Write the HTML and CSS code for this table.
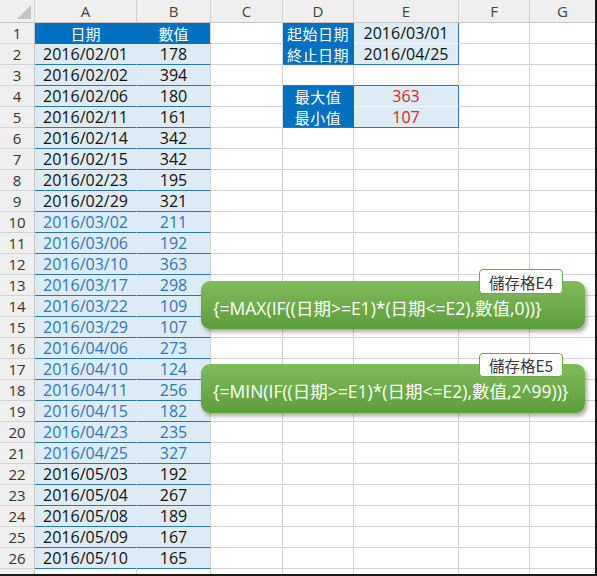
FILE: index.html
```html
<!DOCTYPE html>
<html>
<head>
<meta charset="utf-8">
<link rel="stylesheet" href="styles.css">
</head>
<body>
<div class="sheet">
  <div class="row hdr">
    <div class="c rh corner"><span class="tri"></span></div>
    <div class="c">A</div><div class="c">B</div><div class="c">C</div><div class="c">D</div><div class="c">E</div><div class="c">F</div><div class="c">G</div>
  </div>
  <div class="row">
    <div class="c rh">1</div>
    <div class="c th a">日期</div><div class="c th b">數值</div><div class="c"></div>
    <div class="c lab lab-top">起始日期</div><div class="c val val-top">2016/03/01</div><div class="c"></div><div class="c"></div>
  </div>
  <div class="row">
    <div class="c rh">2</div>
    <div class="c d a">2016/02/01</div><div class="c d b">178</div><div class="c"></div>
    <div class="c lab lab-bot">終止日期</div><div class="c val val-bot">2016/04/25</div><div class="c"></div><div class="c"></div>
  </div>
  <div class="row">
    <div class="c rh">3</div>
    <div class="c d a">2016/02/02</div><div class="c d b">394</div><div class="c"></div>
    <div class="c above"></div><div class="c above"></div><div class="c"></div><div class="c"></div>
  </div>
  <div class="row">
    <div class="c rh">4</div>
    <div class="c d a">2016/02/06</div><div class="c d b">180</div><div class="c"></div>
    <div class="c lab lab-top">最大值</div><div class="c val val-top red">363</div><div class="c"></div><div class="c"></div>
  </div>
  <div class="row">
    <div class="c rh">5</div>
    <div class="c d a">2016/02/11</div><div class="c d b">161</div><div class="c"></div>
    <div class="c lab lab-bot">最小值</div><div class="c val val-bot red">107</div><div class="c"></div><div class="c"></div>
  </div>
  <div class="row">
    <div class="c rh">6</div>
    <div class="c d a">2016/02/14</div><div class="c d b">342</div>
    <div class="c"></div><div class="c"></div><div class="c"></div><div class="c"></div><div class="c"></div>
  </div>
  <div class="row">
    <div class="c rh">7</div>
    <div class="c d a">2016/02/15</div><div class="c d b">342</div>
    <div class="c"></div><div class="c"></div><div class="c"></div><div class="c"></div><div class="c"></div>
  </div>
  <div class="row">
    <div class="c rh">8</div>
    <div class="c d a">2016/02/23</div><div class="c d b">195</div>
    <div class="c"></div><div class="c"></div><div class="c"></div><div class="c"></div><div class="c"></div>
  </div>
  <div class="row">
    <div class="c rh">9</div>
    <div class="c d a">2016/02/29</div><div class="c d b">321</div>
    <div class="c"></div><div class="c"></div><div class="c"></div><div class="c"></div><div class="c"></div>
  </div>
  <div class="row">
    <div class="c rh">10</div>
    <div class="c d a hl">2016/03/02</div><div class="c d b hl">211</div>
    <div class="c"></div><div class="c"></div><div class="c"></div><div class="c"></div><div class="c"></div>
  </div>
  <div class="row">
    <div class="c rh">11</div>
    <div class="c d a hl">2016/03/06</div><div class="c d b hl">192</div>
    <div class="c"></div><div class="c"></div><div class="c"></div><div class="c"></div><div class="c"></div>
  </div>
  <div class="row">
    <div class="c rh">12</div>
    <div class="c d a hl">2016/03/10</div><div class="c d b hl">363</div>
    <div class="c"></div><div class="c"></div><div class="c"></div><div class="c"></div><div class="c"></div>
  </div>
  <div class="row">
    <div class="c rh">13</div>
    <div class="c d a hl">2016/03/17</div><div class="c d b hl">298</div>
    <div class="c"></div><div class="c"></div><div class="c"></div><div class="c"></div><div class="c"></div>
  </div>
  <div class="row">
    <div class="c rh">14</div>
    <div class="c d a hl">2016/03/22</div><div class="c d b hl">109</div>
    <div class="c"></div><div class="c"></div><div class="c"></div><div class="c"></div><div class="c"></div>
  </div>
  <div class="row">
    <div class="c rh">15</div>
    <div class="c d a hl">2016/03/29</div><div class="c d b hl">107</div>
    <div class="c"></div><div class="c"></div><div class="c"></div><div class="c"></div><div class="c"></div>
  </div>
  <div class="row">
    <div class="c rh">16</div>
    <div class="c d a hl">2016/04/06</div><div class="c d b hl">273</div>
    <div class="c"></div><div class="c"></div><div class="c"></div><div class="c"></div><div class="c"></div>
  </div>
  <div class="row">
    <div class="c rh">17</div>
    <div class="c d a hl">2016/04/10</div><div class="c d b hl">124</div>
    <div class="c"></div><div class="c"></div><div class="c"></div><div class="c"></div><div class="c"></div>
  </div>
  <div class="row">
    <div class="c rh">18</div>
    <div class="c d a hl">2016/04/11</div><div class="c d b hl">256</div>
    <div class="c"></div><div class="c"></div><div class="c"></div><div class="c"></div><div class="c"></div>
  </div>
  <div class="row">
    <div class="c rh">19</div>
    <div class="c d a hl">2016/04/15</div><div class="c d b hl">182</div>
    <div class="c"></div><div class="c"></div><div class="c"></div><div class="c"></div><div class="c"></div>
  </div>
  <div class="row">
    <div class="c rh">20</div>
    <div class="c d a hl">2016/04/23</div><div class="c d b hl">235</div>
    <div class="c"></div><div class="c"></div><div class="c"></div><div class="c"></div><div class="c"></div>
  </div>
  <div class="row">
    <div class="c rh">21</div>
    <div class="c d a hl">2016/04/25</div><div class="c d b hl">327</div>
    <div class="c"></div><div class="c"></div><div class="c"></div><div class="c"></div><div class="c"></div>
  </div>
  <div class="row">
    <div class="c rh">22</div>
    <div class="c d a">2016/05/03</div><div class="c d b">192</div>
    <div class="c"></div><div class="c"></div><div class="c"></div><div class="c"></div><div class="c"></div>
  </div>
  <div class="row">
    <div class="c rh">23</div>
    <div class="c d a">2016/05/04</div><div class="c d b">267</div>
    <div class="c"></div><div class="c"></div><div class="c"></div><div class="c"></div><div class="c"></div>
  </div>
  <div class="row">
    <div class="c rh">24</div>
    <div class="c d a">2016/05/08</div><div class="c d b">189</div>
    <div class="c"></div><div class="c"></div><div class="c"></div><div class="c"></div><div class="c"></div>
  </div>
  <div class="row">
    <div class="c rh">25</div>
    <div class="c d a">2016/05/09</div><div class="c d b">167</div>
    <div class="c"></div><div class="c"></div><div class="c"></div><div class="c"></div><div class="c"></div>
  </div>
  <div class="row">
    <div class="c rh">26</div>
    <div class="c d a">2016/05/10</div><div class="c d b">165</div>
    <div class="c"></div><div class="c"></div><div class="c"></div><div class="c"></div><div class="c"></div>
  </div>
  <div class="row">
    <div class="c rh"></div>
    <div class="c"></div><div class="c"></div><div class="c"></div><div class="c"></div><div class="c"></div><div class="c"></div><div class="c"></div>
  </div>

  <div class="callout callout-max">
    <span class="tag">儲存格E4</span>
    <span class="formula">{=MAX(IF((日期&gt;=E1)*(日期&lt;=E2),數值,0))}</span>
  </div>
  <div class="callout callout-min">
    <span class="tag">儲存格E5</span>
    <span class="formula">{=MIN(IF((日期&gt;=E1)*(日期&lt;=E2),數值,2^99))}</span>
  </div>
</div>
</body>
</html>
```

FILE: styles.css
```css
html, body {
  margin: 0;
  padding: 0;
  background: #ffffff;
}

.sheet {
  position: relative;
  width: 597px;
  height: 576px;
  box-sizing: border-box;
  border-right: 2px solid #1a1a1a;
  border-bottom: 2px solid #1a1a1a;
  overflow: hidden;
  font-family: "Open Sans", "Noto Sans CJK TC", sans-serif;
  font-size: 16px;
  color: #111;
}

.row {
  display: grid;
  grid-template-columns: 35px 102px 74px 72px 71px 105px 71px 65px;
  height: 21px;
}

.row.hdr {
  height: 23px;
}

.c {
  box-sizing: border-box;
  border-right: 1px solid #d4d4d4;
  border-bottom: 1px solid #d4d4d4;
  display: flex;
  align-items: center;
  justify-content: center;
  white-space: nowrap;
  line-height: 1;
}

.c:last-child {
  border-right: none;
}

.hdr .c {
  background: #efefef;
  color: #444;
  font-size: 15px;
  border-bottom-color: #c4c4c4;
  border-right-color: #d0d0d0;
}

.corner {
  position: relative;
}

.tri {
  position: absolute;
  right: 3px;
  bottom: 3px;
  width: 0;
  height: 0;
  border-left: 14px solid transparent;
  border-bottom: 14px solid #c4c4c4;
}

.rh {
  background: #efefef;
  color: #333;
  font-size: 15px;
  border-right-color: #c4c4c4;
}

.th {
  background: #0070c0;
  color: #fff;
  font-family: "Noto Sans CJK TC", sans-serif;
  font-size: 15px;
  border-bottom-color: #0070c0;
}

.th.a {
  border-right-color: #0070c0;
}

.d {
  background: #ddebf7;
  border-bottom-color: #2e75b6;
}

.d.a {
  border-right-color: #ddebf7;
}

.hl {
  color: #2f75c4;
}

.lab {
  background: #0070c0;
  color: #fff;
  font-family: "Noto Sans CJK TC", sans-serif;
  font-size: 15px;
  letter-spacing: 0.5px;
  border-right-color: #0070c0;
}

.lab-top {
  border-bottom-color: #0070c0;
}

.lab-bot {
  border-bottom-color: #2e75b6;
}

.val {
  background: #ddebf7;
  border-right-color: #2e75b6;
}

.val-top {
  border-bottom-color: #eef5fb;
}

.val-bot {
  border-bottom-color: #2e75b6;
}

.above {
  border-bottom-color: #2e75b6;
}

.red {
  color: #e0202a;
}

.callout {
  position: absolute;
  left: 201px;
  width: 384px;
  height: 48px;
  box-sizing: border-box;
  border-radius: 9px;
  background: linear-gradient(#80bb5c, #5e9d3b);
  box-shadow: 2px 3px 4px rgba(0, 0, 0, 0.35);
  display: flex;
  align-items: center;
  padding: 4px 0 0 12px;
}

.callout-max {
  top: 281px;
}

.callout-min {
  top: 364px;
  height: 49px;
}

.formula {
  color: #fff;
  font-family: "Open Sans", "Noto Sans CJK TC", sans-serif;
  font-size: 17.5px;
  white-space: nowrap;
}

.tag {
  position: absolute;
  top: -12px;
  left: 278px;
  width: 84px;
  height: 25px;
  box-sizing: border-box;
  background: #fff;
  border: 1px solid #6aaa45;
  border-radius: 4px;
  color: #3a3a3a;
  font-family: "Noto Sans CJK TC", sans-serif;
  font-size: 15.5px;
  display: flex;
  align-items: center;
  justify-content: center;
}

.callout-min .tag {
  top: -11px;
  height: 24px;
}
```
